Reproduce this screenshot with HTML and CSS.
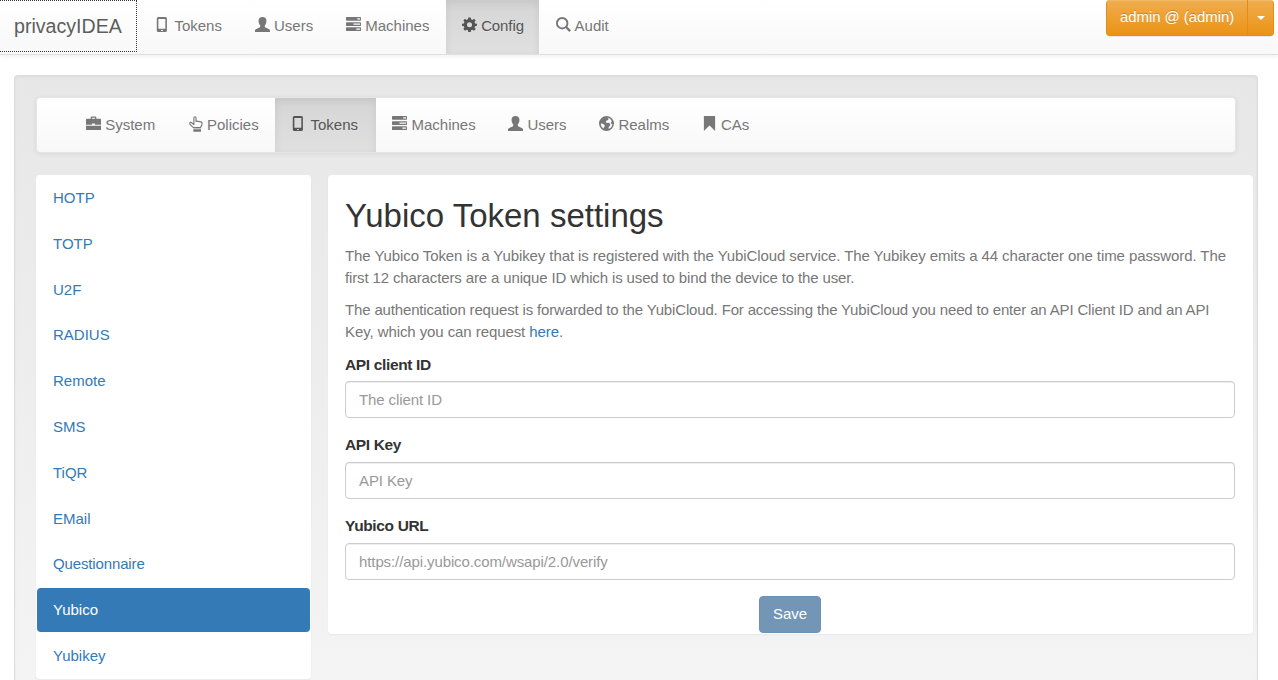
FILE: index.html
```html
<!DOCTYPE html>
<html lang="en">
<head>
<meta charset="utf-8">
<title>privacyIDEA</title>
<link rel="stylesheet" href="styles.css">
</head>
<body>
<svg class="sprite" aria-hidden="true">
  <symbol id="phone" viewBox="0 0 16 16"><path fill-rule="evenodd" d="M3.500 0h7.600Q12.700 0 12.700 1.600v12.800q0 1.600-1.600 1.600H3.500Q1.900 16 1.900 14.400V1.600Q1.900 0 3.500 0zM3.600 2v10.600h7.400V2zM6.400 13.800v1.200h2v-1.200z"/></symbol>
  <symbol id="user" viewBox="0 0 16 16"><path d="M8 0c2.700 0 4.200 1.700 4.200 4.200 0 1.800-.7 3.600-1.700 4.600v1.500c0 .5.300.8.800 1l3.300 1.400c1 .4 1.400 1 1.400 2V16H0v-1.300c0-1 .4-1.600 1.400-2l3.300-1.400c.5-.2.800-.5.800-1V8.800C4.500 7.800 3.800 6 3.800 4.200 3.800 1.700 5.300 0 8 0z"/></symbol>
  <symbol id="server" viewBox="0 0 16 16"><path fill-rule="evenodd" d="M.7 0h14.600q.7 0 .7.700v2.600q0 .7-.7.700H.7Q0 4 0 3.300V.7Q0 0 .7 0zM12 1.300v1.400h3V1.300zM.7 5.500h14.600q.7 0 .7.700v2.600q0 .7-.7.700H.7q-.7 0-.7-.7V6.200q0-.7.7-.7zM8 6.800v1.400h7V6.800zM.7 11h14.600q.7 0 .7.700v2.600q0 .7-.7.700H.7q-.7 0-.7-.7v-2.600q0-.7.7-.7zM11 12.300v1.400h4v-1.400z"/></symbol>
  <symbol id="cog" viewBox="0 0 16 16"><path fill-rule="evenodd" d="M6.700.5h2.600l.4 2 1.400.6 1.700-1.200 1.800 1.800-1.200 1.700.6 1.400 2 .4v2.200l-2 .4-.6 1.400 1.200 1.700-1.800 1.800-1.700-1.200-1.400.6-.4 2H6.700l-.4-2-1.400-.6-1.700 1.200-1.800-1.800 1.200-1.700L2 9.800l-2-.4V7.200l2-.4.6-1.400-1.200-1.700 1.800-1.800 1.700 1.200 1.400-.6zM8 5.500a2.700 2.700 0 1 0 0 5.400 2.700 2.700 0 0 0 0-5.400z"/></symbol>
  <symbol id="search" viewBox="0 0 16 16"><circle cx="6.600" cy="6.600" r="5.600" fill="none" stroke="currentColor" stroke-width="2"/><path d="M9.600 11.200l1.600-1.600 4.800 4.600-1.800 1.800z"/></symbol>
  <symbol id="case" viewBox="0 0 16 16"><path fill-rule="evenodd" d="M5 3V1.500Q5 .5 6 .5h4q1 0 1 1V3h4q1 0 1 1v5.200H9.500V8h-3v1.200H0V4q0-1 1-1zM6.300 1.800V3h3.400V1.800zM0 10.400h16V14q0 1-1 1H1q-1 0-1-1z"/></symbol>
  <symbol id="hand" viewBox="0 0 16 17"><path fill="none" stroke="currentColor" stroke-width="1.200" stroke-linejoin="round" d="M4.800 12.400 1.500 9.500.8 8q-.2-1 .8-1.200.8 0 1.600.7l2 1.600V1.900Q5.200.7 6.300.7t1.200 1.200v3.900q1.200-.8 2.300.1 1-.6 2 .4 1.100-.4 2 .6.200 1.400-.1 2.800l-1.600 2.700z"/><path d="M4.600 13.600h8.200v1H4.600zM4.600 15h8.200v1.800H4.600z"/></symbol>
  <symbol id="globe" viewBox="0 0 16 16"><path fill-rule="evenodd" d="M8 0a8 8 0 1 1 0 16A8 8 0 0 1 8 0zM9 1.700l1.300 1.100-.6 1.400-1.900.8-.6 1.500 1.300 1 2-.4 1.400 1.100.1 1.600-1.600 1.900-.3 2q3.700-1.300 4.200-5l-1.200-.5-.4-1.500 1-.8Q12.300 2.200 9 1.700zM2.800 7.600l-.9 1.100q.3 3.100 3 4.700l.5-1.800 1-1.100-1.200-1.500z"/></symbol>
  <symbol id="bookmark" viewBox="0 0 16 16"><path d="M2 0h12v16l-6-6-6 6z"/></symbol>
</svg>

<nav class="topbar">
  <a class="brand">privacyIDEA</a>
  <div class="menu">
    <a class="item"><svg class="icon"><use href="#phone"/></svg>Tokens</a>
    <a class="item"><svg class="icon"><use href="#user"/></svg>Users</a>
    <a class="item"><svg class="icon"><use href="#server"/></svg>Machines</a>
    <a class="item active"><svg class="icon"><use href="#cog"/></svg>Config</a>
    <a class="item"><svg class="icon"><use href="#search"/></svg>Audit</a>
  </div>
  <div class="account"><a class="account-name">admin @ (admin)</a><a class="account-toggle"><span class="caret"></span></a></div>
</nav>

<main class="well">
  <nav class="subnav">
    <a class="item"><svg class="icon"><use href="#case"/></svg>System</a>
    <a class="item"><svg class="icon icon-hand"><use href="#hand"/></svg>Policies</a>
    <a class="item active"><svg class="icon"><use href="#phone"/></svg>Tokens</a>
    <a class="item"><svg class="icon"><use href="#server"/></svg>Machines</a>
    <a class="item"><svg class="icon"><use href="#user"/></svg>Users</a>
    <a class="item"><svg class="icon"><use href="#globe"/></svg>Realms</a>
    <a class="item"><svg class="icon"><use href="#bookmark"/></svg>CAs</a>
  </nav>
  <div class="columns">
    <aside class="panel types">
      <a class="type">HOTP</a>
      <a class="type">TOTP</a>
      <a class="type">U2F</a>
      <a class="type">RADIUS</a>
      <a class="type">Remote</a>
      <a class="type">SMS</a>
      <a class="type">TiQR</a>
      <a class="type">EMail</a>
      <a class="type tight">Questionnaire</a>
      <a class="type selected">Yubico</a>
      <a class="type">Yubikey</a>
    </aside>
    <section class="panel settings">
      <h1>Yubico Token settings</h1>
      <p><span class="snug">The Yubico Token is a Yubikey that is registered with the YubiCloud service. The Yubikey emits a 44 character one time password. The</span><br><span class="tight">first 12 characters are a unique ID which is used to bind the device to the user.</span></p>
      <p><span class="tighter">The authentication request is forwarded to the YubiCloud. For accessing the YubiCloud you need to enter an API Client ID and an API</span><br><span class="snug">Key, which you can request <a class="link">here</a>.</span></p>
      <form>
        <div class="group"><label for="client">API client ID</label><input id="client" placeholder="The client ID"></div>
        <div class="group"><label class="raised" for="key">API Key</label><input id="key" placeholder="API Key"></div>
        <div class="group"><label class="raised" for="url">Yubico URL</label><input id="url" placeholder="https://api.yubico.com/wsapi/2.0/verify"></div>
        <button class="save" type="button" disabled>Save</button>
      </form>
    </section>
  </div>
</main>
</body>
</html>
```
FILE: styles.css
```css
* { box-sizing: border-box; }
html, body { height: 100%; }
body {
  display: flex;
  flex-direction: column;
  margin: 0;
  overflow: hidden;
  background: #fff;
  color: #333;
  font: 15px/21.600px "Liberation Sans", Arial, sans-serif;
}
.sprite { display: none; }

.topbar {
  display: flex;
  flex: none;
  align-items: flex-start;
  height: 55px;
  border-bottom: 1px solid #e0e0e0;
  background: linear-gradient(#fff, #f8f8f8);
  box-shadow: 0 1px 5px rgba(0, 0, 0, .075);
}
.brand {
  width: 137px;
  height: 52px;
  padding-left: 14px;
  border: 1px dotted #333;
  border-left: 0;
  color: #5e5e5e;
  font-size: 19.600px;
  line-height: 50px;
  text-shadow: 0 1px 0 rgba(255, 255, 255, .25);
}
.menu { display: flex; margin-left: 2px; }
.item {
  display: flex;
  align-items: center;
  height: 54px;
  padding: 0 16.400px 2px;
  color: #777;
  text-shadow: 0 1px 0 rgba(255, 255, 255, .25);
}
.item.active {
  background: linear-gradient(#d5d5d5, #e0e0e0);
  box-shadow: inset 0 3px 9px rgba(0, 0, 0, .075);
  color: #555;
}
.menu .item { padding-right: 16.700px; }
.menu .item.active { width: 93px; padding: 0 0 2px 16px; letter-spacing: -.1px; }
.subnav .item { padding-bottom: 0; }
.subnav .item.active { width: 101px; }
.icon {
  flex: none;
  width: 15px;
  height: 15px;
  margin: -3px 4px 0 0;
  fill: currentColor;
}
.icon-hand { height: 16px; margin-left: 1px; margin-right: 3px; }

.account {
  display: flex;
  height: 36px;
  margin: 0 4px 0 auto;
  border: 1px solid #e38d13;
  border-top: 0;
  border-radius: 4px;
  background: linear-gradient(#f0ad4e, #eb9316);
  box-shadow: inset 0 1px 0 rgba(255, 255, 255, .15), 0 1px 1px rgba(0, 0, 0, .075);
  color: #fff;
  text-shadow: 0 -1px 0 rgba(0, 0, 0, .2);
}
.account-name { width: 140px; padding: 6px 0 0 13px; letter-spacing: -.07px; white-space: nowrap; }
.account-toggle {
  display: flex;
  align-items: center;
  justify-content: center;
  width: 26px;
  border-left: 1px solid #e38d13;
}
.caret { border: 4px solid transparent; border-top-color: #fff; border-bottom: 0; }

.well {
  flex: 1;
  width: 1244px;
  min-height: 0;
  margin: 20px 0 0 14px;
  padding: 21px 21px 0;
  border: 1px solid #dcdcdc;
  border-bottom: 0;
  border-radius: 4px 4px 0 0;
  background: linear-gradient(#e7e7e7, #f4f4f4);
  box-shadow: inset 0 1px 3px rgba(0, 0, 0, .05);
}
.subnav {
  display: flex;
  height: 56px;
  padding-left: 32.800px;
  border: 1px solid #e5e5e5;
  border-radius: 4px;
  background: linear-gradient(#fff, #f8f8f8);
  box-shadow: 0 1px 5px rgba(0, 0, 0, .075);
}
.columns {
  display: grid;
  grid-template-columns: 275px 925px;
  gap: 17px;
  align-items: start;
  margin-top: 22px;
}
.panel {
  border-radius: 4px;
  background: #fff;
  box-shadow: 0 1px 2px rgba(0, 0, 0, .05);
}
.types { display: flex; flex-direction: column; gap: 1.800px; height: 504px; padding: 1px; }
.type { flex: none; height: 44px; padding-left: 16px; color: #337ab7; line-height: 44px; }
.type.selected { border-radius: 4px; background: #337ab7; color: #fff; }

.settings { height: 459px; padding: 22px 18px 0 17px; }
h1 { margin: 0 0 11px; font-size: 33px; font-weight: 400; line-height: 37px; }
p { margin: 0 0 11px; color: #777; line-height: 21.500px; white-space: nowrap; }
.snug { letter-spacing: -.083px; }
.tight { letter-spacing: -.135px; }
.tighter { letter-spacing: -.158px; }
.link { color: #337ab7; }
.group { margin-bottom: 16px; }
label { display: block; height: 28px; padding-top: 1px; font-size: 15.500px; font-weight: 700; letter-spacing: -.35px; }
label.raised { padding-top: 0; }
input {
  display: block;
  width: 100%;
  height: 37px;
  padding: 0 13px;
  border: 1px solid #ccc;
  border-radius: 4px;
  background: #fff;
  box-shadow: inset 0 1px 1px rgba(0, 0, 0, .075);
  font: inherit;
  letter-spacing: -.1px;
}
input::placeholder { color: #999; opacity: 1; }
.save {
  display: block;
  width: 62px;
  height: 37px;
  margin: 0 auto;
  padding: 0 0 2px;
  border: 1px solid #6a92b9;
  border-radius: 4px;
  background: #7396b7;
  color: #fff;
  font: inherit;
}
```
